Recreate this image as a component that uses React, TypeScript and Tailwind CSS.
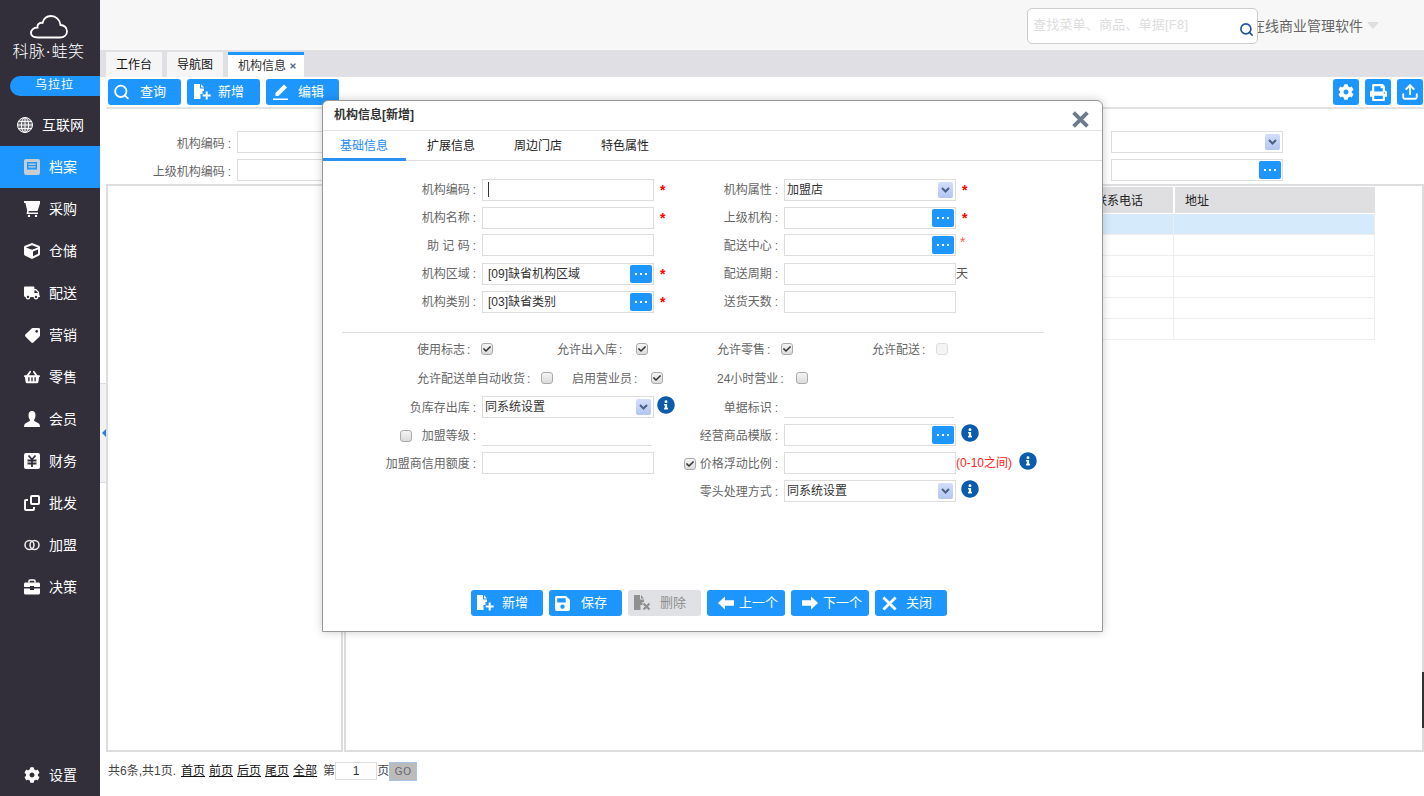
import type { ReactNode } from "react";
import { FaCheck, FaCog, FaCube, FaInfoCircle, FaPrint, FaSave, FaShoppingBasket, FaTag, FaTimes, FaTruck } from "react-icons/fa";
import { Search, Upload } from "lucide-react";

const CloudLogo = () => (
  <svg width="38" height="24" viewBox="0 0 38 24" fill="none" stroke="#fff" strokeWidth="1.8">
    <path d="M8 22.5H30C34 22.5 37 20 37 16.5C37 12.5 34 10 30.5 10C30 5 26 1 21 1C16.5 1 13.5 4 12.5 8C11 7.5 9.5 8 8.5 9C7.5 10 7 11 7.5 12.5C3.5 12.5 1 15 1 18C1 20.5 3.5 22.5 8 22.5Z" />
  </svg>
);

const GlobeIcon = () => (
  <svg width="16" height="16" viewBox="0 0 16 16" fill="none" stroke="#fff" strokeWidth="1">
    <circle cx="8" cy="8" r="7.5" fill="#6d6a74" />
    <ellipse cx="8" cy="8" rx="3.6" ry="7.5" />
    <path d="M8 .5V15.5M.5 8H15.5M1.6 4.4H14.4M1.6 11.6H14.4" />
  </svg>
);

const ArchiveIcon = () => (
  <svg width="16" height="16" viewBox="0 0 16 16">
    <rect width="16" height="16" rx="2" fill="#c9cdd3" />
    <rect x="3" y="3" width="10" height="7.5" fill="#1e96ff" />
    <rect x="4.5" y="4.5" width="7" height="1.4" fill="#c9cdd3" />
    <rect x="4.5" y="7.2" width="7" height="1.4" fill="#c9cdd3" />
  </svg>
);

const CartIcon = () => (
  <svg width="16" height="16" viewBox="0 0 16 16" fill="#fff">
    <path d="M0 0H16V2.5L13.5 10H4.8L4.4 11.5H14V13H2.5L3.2 9.5L1.4 2H0Z" />
    <circle cx="5" cy="15" r="1.2" />
    <circle cx="12" cy="15" r="1.2" />
  </svg>
);

const UserIcon = () => (
  <svg width="16" height="16" viewBox="0 0 16 16" fill="#fff">
    <path d="M8 0C5.5 0 4.5 2 4.5 4.5C4.5 7 5.5 8 6 9C6 10 5 10.5 3 11.5C1 12.5 0 13 0 16H16C16 13 15 12.5 13 11.5C11 10.5 10 10 10 9C10.5 8 11.5 7 11.5 4.5C11.5 2 10.5 0 8 0Z" />
  </svg>
);

const YenIcon = () => (
  <svg width="16" height="16" viewBox="0 0 16 16">
    <rect width="16" height="16" rx="2" fill="#fff" />
    <path d="M4.5 2.5L8 6.5L11.5 2.5M3.5 7.5H12.5M3.5 10.5H12.5M8 6.5V14" fill="none" stroke="#322f3b" strokeWidth="1.8" />
  </svg>
);

const CloneIcon = () => (
  <svg width="16" height="16" viewBox="0 0 16 16" fill="none" stroke="#fff" strokeWidth="2">
    <rect x="7" y="1" width="8" height="8" rx="1" />
    <path d="M4 5H2C1.4 5 1 5.4 1 6V14C1 14.6 1.4 15 2 15H9C9.6 15 10 14.6 10 14V12" />
  </svg>
);

const RingsIcon = () => (
  <svg width="16" height="16" viewBox="0 0 16 16" fill="none" stroke="#e8e8e8" strokeWidth="1.6">
    <circle cx="5.5" cy="8" r="4.5" />
    <circle cx="10.5" cy="8" r="4.5" />
  </svg>
);

const CaseIcon = () => (
  <svg width="16" height="16" viewBox="0 0 16 16">
    <path d="M5 3.5V2C5 1.4 5.4 1 6 1H10C10.6 1 11 1.4 11 2V3.5" fill="none" stroke="#fff" strokeWidth="1.5" />
    <path d="M1.5 3.5H14.5C15.3 3.5 16 4.2 16 5V8H10V7H6V8H0V5C0 4.2.7 3.5 1.5 3.5Z" fill="#fff" />
    <path d="M0 9.5H6V11H10V9.5H16V14C16 14.8 15.3 15.5 14.5 15.5H1.5C.7 15.5 0 14.8 0 14Z" fill="#fff" />
  </svg>
);

const FileAddIcon = () => (
  <svg width="17" height="16" viewBox="0 0 17 16">
    <path d="M0 0H6V4.5H10V7H8.5V10H6.5V15H0Z" fill="#fff" />
    <path d="M7 0L10 3.5H7Z" fill="#fff" />
    <path d="M12.7 7.5V15.5M8.7 11.5H16.7" stroke="#fff" strokeWidth="2" />
  </svg>
);

const FileDelIcon = () => (
  <svg width="17" height="16" viewBox="0 0 17 16">
    <path d="M0 0H6V4.5H10V7H8.5V10H6.5V15H0Z" fill="#909090" />
    <path d="M7 0L10 3.5H7Z" fill="#909090" />
    <path d="M9.5 8.5L15.5 14.5M15.5 8.5L9.5 14.5" stroke="#909090" strokeWidth="2.2" />
  </svg>
);

const EditIcon = () => (
  <svg width="16" height="16" viewBox="0 0 16 16">
    <path d="M1.5 10.5L10 2L13 5L4.5 13.5H1.5Z" fill="#fff" transform="translate(1 -1.5)" />
    <rect y="14.5" width="15" height="1.5" fill="#fff" />
  </svg>
);

const BlockArrow = ({ flip }: { flip?: boolean }) => (
  <svg width="16" height="16" viewBox="0 0 16 16" fill="#fff" className={flip ? "-scale-x-100" : ""}>
    <path d="M0 8L7 1.5V5.2H16V10.8H7V14.5Z" />
  </svg>
);

const XIcon = ({ size, width, color }: { size: number; width: number; color: string }) => (
  <svg width={size} height={size} viewBox="0 0 16 16" fill="none" stroke={color} strokeWidth={width}>
    <path d="M1.5 1.5L14.5 14.5M14.5 1.5L1.5 14.5" />
  </svg>
);

const navItems = [
  { name: "采购", icon: <CartIcon /> },
  { name: "仓储", icon: <FaCube size={16} /> },
  { name: "配送", icon: <FaTruck size={16} /> },
  { name: "营销", icon: <FaTag size={15} className="-scale-x-100" /> },
  { name: "零售", icon: <FaShoppingBasket size={16} /> },
  { name: "会员", icon: <UserIcon /> },
  { name: "财务", icon: <YenIcon /> },
  { name: "批发", icon: <CloneIcon /> },
  { name: "加盟", icon: <RingsIcon /> },
  { name: "决策", icon: <CaseIcon /> },
];

const Sidebar = () => (
  <aside className="w-[100px] shrink-0 h-full bg-[#322f3b] text-white flex flex-col">
    <div className="h-[76px] flex flex-col items-center pt-[15px] pr-[3px]">
      <CloudLogo />
      <div className="text-[16px] leading-[20px] mt-[3px] font-light tracking-[0.5px]">科脉·蛙笑</div>
    </div>
    <div className="ml-[10px] h-[20px] rounded-l-full bg-[#1e96ff] text-[12px] leading-[18px] tracking-[1px] text-center pr-[1px]">
      乌拉拉
    </div>
    <div className="mt-[8px] h-[42px] flex items-center pl-[17px] gap-[9px] text-[14px]">
      <GlobeIcon />
      互联网
    </div>
    <div className="h-[42px] flex items-center pl-[24px] gap-[9px] text-[14px] bg-[#1e96ff]">
      <ArchiveIcon />
      档案
    </div>
    {navItems.map((item) => (
      <div key={item.name} className="h-[42px] flex items-center pl-[24px] gap-[9px] text-[14px]">
        <span className="w-[16px] flex justify-center">{item.icon}</span>
        {item.name}
      </div>
    ))}
    <div className="mt-auto h-[42px] flex items-center pl-[24px] gap-[9px] text-[14px]">
      <FaCog size={16} />
      设置
    </div>
  </aside>
);

const Btn = ({ icon, text, className }: { icon: ReactNode; text: string; className: string }) => (
  <button className={`h-[26px] rounded-[3px] flex items-center text-[13px] shrink-0 ${className}`}>
    <span className="w-[17px] flex justify-center">{icon}</span>
    {text}
  </button>
);

const IconBtn = ({ children }: { children: ReactNode }) => (
  <button className="w-[26px] h-[26px] rounded-[3px] bg-[#1e96ff] text-white flex items-center justify-center">
    {children}
  </button>
);

const Dots = () => (
  <span className="absolute right-[1px] top-[1px] w-[22px] h-[18px] rounded-[2px] bg-[#1e96ff] flex items-center justify-center gap-[3px]">
    <i className="w-[2px] h-[2px] bg-white" />
    <i className="w-[2px] h-[2px] bg-white" />
    <i className="w-[2px] h-[2px] bg-white" />
  </span>
);

const Arrow = () => (
  <span className="absolute right-[2px] top-[2px] w-[15px] h-[16px] rounded-[2px] bg-gradient-to-b from-[#d3defa] to-[#b3c6f2] flex items-center justify-center">
    <svg width="9" height="6" viewBox="0 0 9 6" fill="none" stroke="#4d6185" strokeWidth="2">
      <path d="M1 1L4.5 4.5L8 1" />
    </svg>
  </span>
);

const Box = ({ value, trailing, cursor }: { value?: string; trailing?: ReactNode; cursor?: boolean }) => (
  <div className="relative w-[172px] h-[22px] border border-[#ddd] bg-white text-[12px] leading-[20px] text-[#333] pl-[5px]">
    {value}
    {cursor && <span className="absolute left-[5px] top-[2px] w-px h-[15px] bg-[#333]" />}
    {trailing}
  </div>
);

const SelectBox = ({ value }: { value: string }) => (
  <div className="relative w-[172px] h-[22px] border border-[#ddd] bg-white text-[12px] leading-[20px] text-[#333] pl-[2px]">
    {value}
    <Arrow />
  </div>
);

const Line = () => <div className="w-[170px] h-[22px] border-b border-[#ddd]" />;

const Check = ({ on, disabled }: { on?: boolean; disabled?: boolean }) => (
  <span
    className={`inline-flex w-[12px] h-[12px] shrink-0 items-center justify-center rounded-[3px] border ${
      disabled ? "border-[#ddd] bg-[#f4f4f4]" : "border-[#aaa] bg-gradient-to-b from-[#f4f4f4] to-[#dcdcdc]"
    }`}
  >
    {on && <FaCheck size={8} color="#333" />}
  </span>
);

const Label = ({ text, prefix, className }: { text: string; prefix?: ReactNode; className: string }) => (
  <div className={`flex items-center justify-end pr-[6px] pt-[1px] text-[12px] text-[#666] ${className}`}>
    {prefix}
    <span className="whitespace-pre">{text}</span>
    <span className="ml-[3px]">:</span>
  </div>
);

const Star = ({ small }: { small?: boolean }) => (
  <span className={small ? "ml-[4px] -mt-[5px] text-[14px] text-[#f55]" : "ml-[6px] mt-[2px] text-[14px] font-bold text-[#f00]"}>
    *
  </span>
);

const Info = ({ className }: { className: string }) => (
  <span className={`self-start flex ${className}`}>
    <FaInfoCircle size={18} color="#0b5cad" />
  </span>
);

const Row = ({ left, right }: { left: ReactNode; right: ReactNode }) => (
  <div className="grid grid-cols-[342px_1fr] h-[22px]">
    <div className="flex items-center">{left}</div>
    <div className="flex items-center">{right}</div>
  </div>
);

const CheckCell = ({ text, on, disabled, gap, className }: { text: string; on?: boolean; disabled?: boolean; gap: string; className?: string }) => (
  <div className={`flex items-center text-[12px] text-[#666] ${gap} ${className ?? ""}`}>
    <span className="pt-[1px]">
      {text}
      <span className="ml-[2px]">:</span>
    </span>
    <Check on={on} disabled={disabled} />
  </div>
);

const LL = "w-[140px]";
const RL = "w-[100px]";

const Modal = () => (
  <div className="absolute left-[322px] top-[100px] w-[781px] h-[532px] flex flex-col bg-white border border-[#999] rounded-t-[6px] shadow-[0_0_10px_rgba(0,0,0,0.2)]">
    <div className="h-[30px] shrink-0 flex items-center justify-between pl-[11px] pr-[13px] border-b border-[#e2e2e2] text-[12px] font-bold text-[#333]">
      <span className="pb-[2px]">机构信息[新增]</span>
      <span className="mt-[7px]">
        <XIcon size={17} width={3.6} color="#6b7b8c" />
      </span>
    </div>
    <div className="h-[30px] shrink-0 flex gap-[3px] border-b border-[#ddd] text-[12px] text-[#222]">
      <div className="w-[83px] pl-[17px] leading-[30px] text-[#1e8cf0] border-b-[3px] border-[#2a8ff0] h-[30px]">基础信息</div>
      <div className="w-[84px] pl-[18px] leading-[30px]">扩展信息</div>
      <div className="w-[84px] pl-[18px] leading-[30px]">周边门店</div>
      <div className="w-[84px] pl-[18px] leading-[30px]">特色属性</div>
    </div>

    <div className="flex-1 pl-[19px] pt-[17px]">
      <div className="flex flex-col gap-[6px]">
        <Row
          left={<><Label text="机构编码" className={LL} /><Box cursor /><Star /></>}
          right={<><Label text="机构属性" className={RL} /><SelectBox value="加盟店" /><Star /></>}
        />
        <Row
          left={<><Label text="机构名称" className={LL} /><Box /><Star /></>}
          right={<><Label text="上级机构" className={RL} /><Box trailing={<Dots />} /><Star /></>}
        />
        <Row
          left={<><Label text="助 记 码" className={LL} /><Box /></>}
          right={<><Label text="配送中心" className={RL} /><Box trailing={<Dots />} /><Star small /></>}
        />
        <Row
          left={<><Label text="机构区域" className={LL} /><Box value="[09]缺省机构区域" trailing={<Dots />} /><Star /></>}
          right={<><Label text="配送周期" className={RL} /><Box /><span className="text-[12px] text-[#555]">天</span></>}
        />
        <Row
          left={<><Label text="机构类别" className={LL} /><Box value="[03]缺省类别" trailing={<Dots />} /><Star /></>}
          right={<><Label text="送货天数" className={RL} /><Box /></>}
        />
      </div>

      <div className="mt-[20px] w-[702px] h-px bg-[#ddd]" />

      <div className="mt-[5px] h-[22px] flex pl-[75px]">
        <CheckCell text="使用标志" on gap="gap-[11px]" className="w-[140px]" />
        <CheckCell text="允许出入库" on gap="gap-[14px]" className="w-[160px]" />
        <CheckCell text="允许零售" on gap="gap-[11px]" className="w-[155px]" />
        <CheckCell text="允许配送" disabled gap="gap-[11px]" />
      </div>
      <div className="mt-[7px] h-[22px] flex pl-[75px]">
        <CheckCell text="允许配送单自动收货" gap="gap-[11px]" className="w-[155px]" />
        <CheckCell text="启用营业员" on gap="gap-[14px]" className="w-[145px]" />
        <CheckCell text="24小时营业" gap="gap-[12px]" />
      </div>

      <div className="mt-[7px] flex flex-col gap-[6px]">
        <Row
          left={<><Label text="负库存出库" className={LL} /><SelectBox value="同系统设置" /><Info className="ml-[3px]" /></>}
          right={<><Label text="单据标识" className={RL} /><Line /></>}
        />
        <Row
          left={<><Label text="加盟等级" prefix={<span className="mr-[10px] flex"><Check /></span>} className={LL} /><Line /></>}
          right={<><Label text="经营商品模版" className={RL} /><Box trailing={<Dots />} /><Info className="ml-[5px]" /></>}
        />
        <Row
          left={<><Label text="加盟商信用额度" className={LL} /><Box /></>}
          right={
            <>
              <Label text="价格浮动比例" prefix={<span className="mr-[4px] flex"><Check on /></span>} className={RL} />
              <Box />
              <span className="text-[12px] text-[#f22] w-[58px] whitespace-nowrap">(0-10之间)</span>
              <Info className="ml-[5px]" />
            </>
          }
        />
        <Row
          left={<div />}
          right={<><Label text="零头处理方式" className={RL} /><SelectBox value="同系统设置" /><Info className="ml-[5px]" /></>}
        />
      </div>
    </div>

    <div className="flex gap-[6px] pl-[148px] pb-[15px]">
      <Btn icon={<FileAddIcon />} text="新增" className="w-[72px] pl-[6px] gap-[8px] bg-[#1e96ff] text-white" />
      <Btn icon={<FaSave size={17} />} text="保存" className="w-[73px] pl-[5px] gap-[10px] bg-[#1e96ff] text-white" />
      <Btn icon={<FileDelIcon />} text="删除" className="w-[73px] pl-[6px] gap-[9px] bg-[#dfe1e5] text-[#8f8f8f]" />
      <Btn icon={<BlockArrow />} text="上一个" className="w-[78px] pl-[10px] gap-[5px] bg-[#1e96ff] text-white" />
      <Btn icon={<BlockArrow flip />} text="下一个" className="w-[78px] pl-[10px] gap-[5px] bg-[#1e96ff] text-white" />
      <Btn icon={<XIcon size={15} width={3} color="#fff" />} text="关闭" className="w-[72px] pl-[6px] gap-[8px] bg-[#1e96ff] text-white" />
    </div>
  </div>
);

const rows = [0, 1, 2, 3, 4, 5];

const Table = () => (
  <div className="w-[1029px] mt-px text-[12px] text-[#222]">
    <div className="flex h-[26px] bg-[#dfdfe1] leading-[29px]">
      <div className="flex-1" />
      <div className="w-[90px] pl-[10px] border-r-2 border-white">联系电话</div>
      <div className="w-[200px] pl-[10px]">地址</div>
    </div>
    {rows.map((r) => (
      <div key={r} className={`flex h-[21px] border-b border-[#eee] border-r ${r === 0 ? "bg-[#d5ebfb] mt-px" : ""}`}>
        <div className="flex-1" />
        <div className="w-[90px] border-r border-[#eee]" />
        <div className="w-[200px]" />
      </div>
    ))}
  </div>
);

const PageLink = ({ children }: { children: string }) => <a className="underline text-[#111]">{children}</a>;

const App = () => (
  <div className="relative flex w-[1424px] h-[796px] overflow-hidden bg-white font-['Liberation_Sans','Noto_Sans_CJK_SC',sans-serif]">
    <Sidebar />
    <main className="flex-1 min-w-0 flex flex-col">
      <header className="h-[50px] shrink-0 bg-[#f7f7f7] flex justify-end pr-[61px]">
        <div className="relative z-10 mt-[8px] -mr-[7px] w-[231px] h-[36px] rounded-[5px] border border-[#ccc] bg-white pl-[5px] text-[13px] tracking-[0.2px] leading-[32px] text-[#ddd]">
          查找菜单、商品、单据[F8]
          <Search size={15} strokeWidth={2.6} color="#1f55a5" className="absolute right-[3px] top-[13px]" />
        </div>
        <div className="w-[112px] mt-[17px] text-[14px] leading-[18px] text-[#666] whitespace-nowrap">在线商业管理软件</div>
        <span className="absolute right-[45px] top-[22px] w-0 h-0 border-x-[6px] border-x-transparent border-t-[7px] border-t-[#ddd]" />
      </header>

      <div className="h-[27px] shrink-0 bg-[#dfdfe4] flex items-end pl-[6px] gap-[5px] text-[12px]">
        <div className="w-[56px] h-[25px] bg-[#f5f5f5] text-center leading-[26px] text-[#111]">工作台</div>
        <div className="w-[56px] h-[25px] bg-[#f5f5f5] text-center leading-[26px] text-[#111]">导航图</div>
        <div className="w-[76px] h-[25px] bg-white border-t-[3px] border-[#1e96ff] pl-[10px] leading-[21px] text-[#333] flex items-center gap-[3px]">
          机构信息
          <FaTimes size={8} color="#5b6f8c" />
        </div>
      </div>

      <div className="ml-[6px] flex-1 flex flex-col min-h-0">
        <div className="h-[32px] shrink-0 border-b-2 border-[#e2e2e2] pl-[2px] pt-[2px] pr-px flex gap-[6px]">
          <Btn icon={<Search size={18} strokeWidth={2.6} />} text="查询" className="w-[73px] pl-[5px] gap-[10px] bg-[#1e96ff] text-white" />
          <Btn icon={<FileAddIcon />} text="新增" className="w-[73px] pl-[7px] gap-[7px] bg-[#1e96ff] text-white" />
          <Btn icon={<EditIcon />} text="编辑" className="w-[73px] pl-[6px] gap-[9px] bg-[#1e96ff] text-white" />
          <div className="ml-auto flex gap-[6px]">
            <IconBtn><FaCog size={16} /></IconBtn>
            <IconBtn><FaPrint size={17} /></IconBtn>
            <IconBtn><Upload size={18} strokeWidth={2.4} /></IconBtn>
          </div>
        </div>

        <div className="h-[75px] shrink-0 pt-[22px] flex flex-col gap-[6px] pr-[141px]">
          <div className="flex justify-between">
            <div className="flex">
              <Label text="机构编码" className="w-[131px] pt-[4px]" />
              <Box />
            </div>
            <SelectBox value="" />
          </div>
          <div className="flex justify-between">
            <div className="flex">
              <Label text="上级机构编码" className="w-[131px] pt-[4px]" />
              <Box />
            </div>
            <Box trailing={<Dots />} />
          </div>
        </div>

        <div className="h-[568px] shrink-0 flex gap-[1px]">
          <div className="w-[237px] border-2 border-[#ddd]" />
          <div className="flex-1 border-2 border-[#ddd]">
            <Table />
          </div>
        </div>

        <footer className="flex-1 flex items-center pl-[2px] pb-[6px] text-[12px] text-[#444]">
          <span className="mr-[5px]">共6条,共1页.</span>
          <span className="flex gap-[4px] mr-[6px]">
            <PageLink>首页</PageLink>
            <PageLink>前页</PageLink>
            <PageLink>后页</PageLink>
            <PageLink>尾页</PageLink>
            <PageLink>全部</PageLink>
          </span>
          第
          <span className="w-[42px] h-[18px] border border-[#ddd] text-center leading-[16px] text-[#333]">1</span>
          页
          <span className="w-[28px] h-[19px] bg-[#bbb] border border-[#a8c4e0] text-center text-[10px] tracking-[0.5px] leading-[18px] text-[#666]">GO</span>
        </footer>
      </div>
    </main>

    {/* sidebar collapse handle */}
    <div className="absolute left-[100px] top-[383px] w-[6px] h-[100px] bg-[#f2f2f2] border-y border-[#ddd] flex items-center justify-end">
      <span className="w-0 h-0 border-y-[4px] border-y-transparent border-r-[4px] border-r-[#2a7fd5]" />
    </div>
    <div className="absolute right-0 top-[672px] w-[2px] h-[56px] bg-[#333]" />
    <Modal />
  </div>
);

export default App;
